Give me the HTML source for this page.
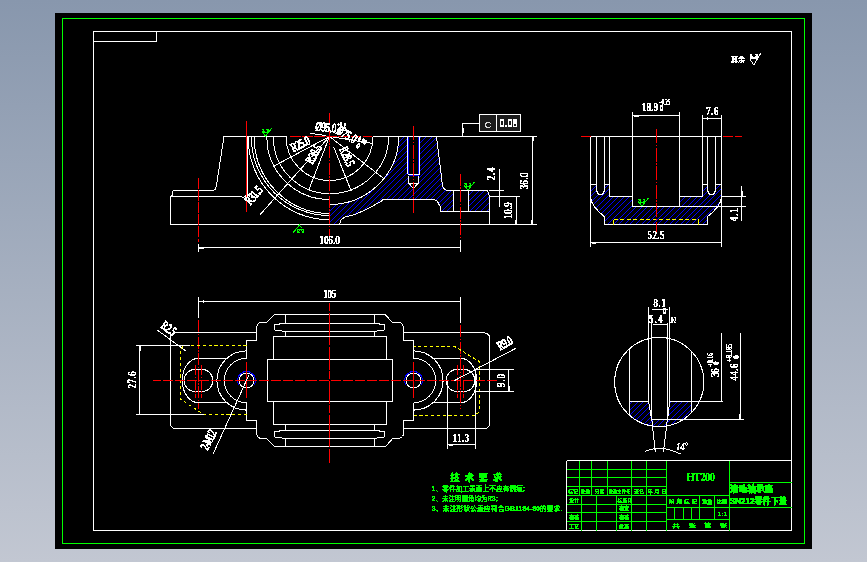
<!DOCTYPE html>
<html lang="zh"><head><meta charset="utf-8"><title>SN212 滚动轴承座 零件下盖</title>
<style>html,body{margin:0;padding:0;background:#a5afbe;overflow:hidden}svg{display:block;position:absolute;left:0;top:0}text{white-space:pre}</style></head>
<body>
<svg width="867" height="562" viewBox="0 0 867 562">
<defs><linearGradient id="bg" x1="0" y1="0" x2="0" y2="1"><stop offset="0" stop-color="#8897ad"/><stop offset="1" stop-color="#c2c7d2"/></linearGradient><filter id="crisp" x="0" y="0" width="867" height="562" filterUnits="userSpaceOnUse" color-interpolation-filters="sRGB"><feComponentTransfer><feFuncA type="discrete" tableValues="0 0 1 1 1"/></feComponentTransfer></filter><clipPath id="cf"><path d="M329.5 204.5 L329.5 204.5 L333.12 204.41 L336.73 204.13 L340.33 203.66 L343.89 203.01 L347.41 202.18 L350.88 201.17 L354.3 199.98 L357.65 198.62 L360.92 197.09 L364.1 195.39 L367.19 193.53 L370.17 191.51 L373.05 189.35 L375.8 187.03 L378.43 184.58 L380.93 182 L383.28 179.29 L385.48 176.47 L387.54 173.54 L389.43 170.5 L391.16 167.37 L392.72 164.16 L394.1 160.87 L395.31 157.51 L396.34 154.1 L397.19 150.64 L397.85 147.14 L398.32 143.61 L398.61 140.06 L398.7 136.5 L436.5 136.5 L442.4 184.8 L443.2 187.6 L445.2 189.8 L448.7 190.4 L487.3 190.4 L489.4 196.6 L489.4 211.2 L440.8 211.2 L440.6 207.5 L439.4 205.2 L437.5 201.5 L433.9 199.3 L383.5 199.3 L381.3 201.2 L371 207 L364 210.5 L354.7 214.5 L345.5 216.8 L341 219.7 L339.7 223.8 L339.7 224.5 L329.5 224.5ZM407.5 136.5 L419.5 136.5 L419.5 174.3 L418.5 174.3 L418.5 183 L413.5 188.4 L408.5 183 L408.5 174.3 L407.5 174.3ZM453.3 190.4 L468.3 190.4 L468.3 211.2 L453.3 211.2Z" clip-rule="evenodd"/></clipPath><clipPath id="cs"><path d="M590.5 184.5 L596.5 184.5 L596.5 190.5 L598.5 194.5 L602.5 194.5 L604.5 190.5 L604.5 184.5 L609.5 184.5 L609.5 196.5 L632.5 196.5 L632.5 206.5 L679.5 206.5 L679.5 196.5 L702.5 196.5 L702.5 184.5 L707.5 184.5 L707.5 190.5 L709.5 194.5 L713.5 194.5 L715.5 190.5 L715.5 184.5 L721.5 184.5 L721.5 197 L720.5 201.8 L717.3 207 L712.7 212.2 L708.1 216.2 L707.5 216.8 L707.5 224.5 L604.5 224.5 L604.5 216.8 L603.9 216.2 L599.3 212.2 L594.7 207 L591.5 201.8 L590.5 197Z" clip-rule="evenodd"/></clipPath><clipPath id="cd"><path d="M629.5 401.5 L629.5 415.27 L631.24 416.75 L633.05 418.13 L634.93 419.42 L636.87 420.61 L638.87 421.7 L640.92 422.68 L643.02 423.56 L645.16 424.33 L647.34 425 L649.55 425.54 L651.79 425.98 L654.04 426.3 L656.31 426.51 L658.59 426.6 L660.87 426.57 L663.14 426.43 L665.4 426.17 L667.65 425.79 L669.87 425.3 L672.07 424.7 L674.23 423.99 L676.36 423.17 L678.44 422.24 L680.46 421.2 L682.44 420.07 L684.35 418.83 L686.2 417.5 L687.98 416.08 L689.68 414.56 L691.3 412.96 L691.3 401.5ZM648.6 401.5 L669.6 401.5 L667.6 419.2 L651.6 419.2Z" clip-rule="evenodd"/></clipPath></defs>
<rect width="867" height="562" fill="url(#bg)"/>
<rect x="55" y="13" width="757" height="536" fill="#000"/>
<g fill="none" stroke-width="1" shape-rendering="crispEdges">
<rect x="62.5" y="18.5" width="742" height="525" stroke="#0f0"/>
<rect x="93.5" y="31.5" width="698" height="499" stroke="#fff"/>
<line x1="93" y1="41.5" x2="157" y2="41.5" stroke="#fff"/>
<line x1="156.5" y1="31" x2="156.5" y2="42" stroke="#fff"/>
<g clip-path="url(#cf)" stroke="#00f"><path d="M328.5 139.5L492.5 -24.5M328.5 145.5L492.5 -18.5M328.5 150.5L492.5 -13.5M328.5 156.5L492.5 -7.5M328.5 161.5L492.5 -2.5M328.5 167.5L492.5 3.5M328.5 173.5L492.5 9.5M328.5 178.5L492.5 14.5M328.5 184.5L492.5 20.5M328.5 189.5L492.5 25.5M328.5 195.5L492.5 31.5M328.5 201.5L492.5 37.5M328.5 206.5L492.5 42.5M328.5 212.5L492.5 48.5M328.5 217.5L492.5 53.5M328.5 223.5L492.5 59.5M328.5 229.5L492.5 65.5M328.5 234.5L492.5 70.5M328.5 240.5L492.5 76.5M328.5 245.5L492.5 81.5M328.5 251.5L492.5 87.5M328.5 257.5L492.5 93.5M328.5 262.5L492.5 98.5M328.5 268.5L492.5 104.5M328.5 273.5L492.5 109.5M328.5 279.5L492.5 115.5M328.5 285.5L492.5 121.5M328.5 290.5L492.5 126.5M328.5 296.5L492.5 132.5M328.5 301.5L492.5 137.5M328.5 307.5L492.5 143.5M328.5 313.5L492.5 149.5M328.5 318.5L492.5 154.5M328.5 324.5L492.5 160.5M328.5 329.5L492.5 165.5M328.5 335.5L492.5 171.5M328.5 341.5L492.5 177.5M328.5 346.5L492.5 182.5M328.5 352.5L492.5 188.5M328.5 357.5L492.5 193.5M328.5 363.5L492.5 199.5M328.5 369.5L492.5 205.5M328.5 374.5L492.5 210.5M328.5 380.5L492.5 216.5M328.5 385.5L492.5 221.5"/></g>
<line x1="224" y1="136.5" x2="286.5" y2="136.5" stroke="#fff"/>
<line x1="373" y1="136.5" x2="537" y2="136.5" stroke="#fff"/>
<line x1="170.5" y1="224.5" x2="537" y2="224.5" stroke="#fff"/>
<path d="M224 136.5 L216.3 186.5 L215.5 189 L213.5 190.6 L210.5 190.5 L172.5 190.5" stroke="#fff" fill="none"/>
<path d="M172.5 190.5 L172.5 195 L170.5 196.5 L170.5 224.5" stroke="#fff" fill="none"/>
<path d="M170.5 196.5 L240.7 196.5 L243 197.3 L245.5 196.5 L247.3 193" stroke="#fff" fill="none"/>
<line x1="247.5" y1="136.5" x2="247.5" y2="196.5" stroke="#fff"/>
<path d="M436.5 136.5 L442.4 184.8 L443.2 187.6 L445.2 189.8 L448.7 190.4 L487.3 190.4 L489.5 196.6" stroke="#fff" fill="none"/>
<line x1="489.5" y1="196.6" x2="489.5" y2="224.5" stroke="#fff"/>
<line x1="489.5" y1="196.5" x2="520" y2="196.5" stroke="#fff"/>
<path d="M383.5 199.3 L433.9 199.3 L437.5 201.5 L439.4 205.2 L440.6 207.5 L440.8 211.2 L489.5 211.2" stroke="#fff" fill="none"/>
<path d="M383.5 199.3 L381.3 201.2 L371 207 L364 210.5 L354.7 214.5 L345.5 216.8 L341 219.7 L339.7 223.8 L339.7 224.5" stroke="#fff" fill="none"/>
<line x1="453.5" y1="190.4" x2="453.5" y2="211.2" stroke="#fff"/>
<line x1="468.5" y1="190.4" x2="468.5" y2="211.2" stroke="#fff"/>
<line x1="407.5" y1="136.5" x2="407.5" y2="174.3" stroke="#fff"/>
<line x1="419.5" y1="136.5" x2="419.5" y2="174.3" stroke="#fff"/>
<line x1="408.5" y1="136.5" x2="408.5" y2="174.3" stroke="#00f"/>
<line x1="418.5" y1="136.5" x2="418.5" y2="174.3" stroke="#00f"/>
<line x1="407.5" y1="174.5" x2="420" y2="174.5" stroke="#fff"/>
<line x1="408.5" y1="175.5" x2="419" y2="175.5" stroke="#00f"/>
<path d="M408.5 175.5 L408.5 183 L413.5 188.4 L418.5 183 L418.5 175.5" stroke="#fff" fill="none"/>
<line x1="408.5" y1="183.5" x2="419" y2="183.5" stroke="#fff"/>
<path d="M273.3 137.3 A56.2 56.3 0 0 0 329.5 193.6" stroke="#fff" fill="none"/>
<path d="M266.9 137.3 A62.6 62.2 0 0 0 329.5 199.5" stroke="#fff" fill="none"/>
<path d="M254.2 137.3 A75.3 76.2 0 0 0 329.5 213.5" stroke="#fff" fill="none"/>
<path d="M251.3 137.3 A78.2 78.2 0 0 0 329.5 215.5" stroke="#fff" fill="none"/>
<path d="M248.1 137.3 A81.4 82.5 0 0 0 329.5 219.8" stroke="#fff" fill="none"/>
<path d="M286.2 137.3 A43.3 43.3 0 0 0 372.8 137.3" stroke="#fff" fill="none"/>
<path d="M329.5 193.7 A59.2 57.2 0 0 0 388.7 136.5" stroke="#fff" fill="none"/>
<path d="M329.5 204.5 A69.2 68 0 0 0 398.7 136.5" stroke="#fff" fill="none"/>
<line x1="329.5" y1="136.5" x2="274.32" y2="165.84" stroke="#fff"/>
<line x1="329.5" y1="136.5" x2="260.12" y2="214.64" stroke="#fff"/>
<line x1="329.5" y1="136.5" x2="309.07" y2="189.18" stroke="#fff"/>
<line x1="333.57" y1="146.72" x2="351.13" y2="190.85" stroke="#fff"/>
<line x1="329.5" y1="136.5" x2="384.02" y2="178.79" stroke="#fff"/>
<line x1="329.5" y1="136.5" x2="372.93" y2="143.53" stroke="#fff"/>
<line x1="310.4" y1="133.3" x2="325.7" y2="135.6" stroke="#fff"/>
<line x1="290" y1="136.5" x2="371.5" y2="136.5" stroke="#f00" stroke-dasharray="10.6 1.5"/>
<line x1="329.5" y1="113" x2="329.5" y2="241" stroke="#f00" stroke-dasharray="12 1.5 1.5 1.5"/>
<line x1="246.5" y1="121" x2="246.5" y2="212" stroke="#f00"/>
<line x1="198.5" y1="178" x2="198.5" y2="242" stroke="#f00" stroke-dasharray="10.6 1.5"/>
<line x1="460.5" y1="173.5" x2="460.5" y2="238" stroke="#f00" stroke-dasharray="12 1.5 1.5 1.5"/>
<line x1="413.5" y1="126" x2="413.5" y2="212.5" stroke="#f00" stroke-dasharray="14 1.5 1.5 1.5"/>
<line x1="198" y1="247.5" x2="461" y2="247.5" stroke="#fff"/>
<line x1="198.5" y1="244" x2="198.5" y2="252" stroke="#fff"/>
<line x1="460.5" y1="240" x2="460.5" y2="252" stroke="#fff"/>
<line x1="199" y1="248.5" x2="204" y2="248.5" stroke="#fff"/>
<line x1="532.5" y1="136.5" x2="532.5" y2="224.5" stroke="#fff"/>
<line x1="533.5" y1="136.5" x2="533.5" y2="141" stroke="#fff"/>
<line x1="531.5" y1="220" x2="531.5" y2="224.5" stroke="#fff"/>
<line x1="499.5" y1="169" x2="499.5" y2="207" stroke="#fff"/>
<line x1="489" y1="190.5" x2="503.7" y2="190.5" stroke="#fff"/>
<line x1="516.5" y1="196.6" x2="516.5" y2="224.5" stroke="#fff"/>
<line x1="515.5" y1="220" x2="515.5" y2="224.5" stroke="#fff"/>
<rect x="479.5" y="114.5" width="41" height="17" stroke="#fff" fill="#1c1c1c"/>
<line x1="496.5" y1="114.5" x2="496.5" y2="131.5" stroke="#fff"/>
<path d="M479.5 123.5 L462.5 123.5 L462.5 136.5" stroke="#fff" fill="none"/>
<line x1="463.5" y1="128" x2="463.5" y2="133" stroke="#fff"/>
<path d="M263 133 L265.5 136 L272 128" stroke="#0f0" fill="none"/>
<path d="M465.5 187 L468 190 L474.5 182" stroke="#0f0" fill="none"/>
<path d="M292.9 233 L299.4 225 L301.9 228" stroke="#0f0" fill="none"/>
<g clip-path="url(#cs)" stroke="#00f"><path d="M588.5 187.5L724.5 51.5M588.5 193.5L724.5 57.5M588.5 198.5L724.5 62.5M588.5 204.5L724.5 68.5M588.5 209.5L724.5 73.5M588.5 215.5L724.5 79.5M588.5 221.5L724.5 85.5M588.5 226.5L724.5 90.5M588.5 232.5L724.5 96.5M588.5 237.5L724.5 101.5M588.5 243.5L724.5 107.5M588.5 249.5L724.5 113.5M588.5 254.5L724.5 118.5M588.5 260.5L724.5 124.5M588.5 265.5L724.5 129.5M588.5 271.5L724.5 135.5M588.5 277.5L724.5 141.5M588.5 282.5L724.5 146.5M588.5 288.5L724.5 152.5M588.5 293.5L724.5 157.5M588.5 299.5L724.5 163.5M588.5 305.5L724.5 169.5M588.5 310.5L724.5 174.5M588.5 316.5L724.5 180.5M588.5 321.5L724.5 185.5M588.5 327.5L724.5 191.5M588.5 333.5L724.5 197.5M588.5 338.5L724.5 202.5M588.5 344.5L724.5 208.5M588.5 349.5L724.5 213.5M588.5 355.5L724.5 219.5M588.5 361.5L724.5 225.5"/></g>
<line x1="590.5" y1="136.5" x2="721.5" y2="136.5" stroke="#fff"/>
<line x1="590.5" y1="136.5" x2="590.5" y2="197" stroke="#fff"/>
<line x1="721.5" y1="136.5" x2="721.5" y2="197" stroke="#fff"/>
<path d="M590.5 197 L591.5 201.8 L594.7 207 L599.3 212.2 L603.9 216.2 L604.5 216.8 L604.5 224.5" stroke="#fff" fill="none"/>
<path d="M721.5 197 L720.5 201.8 L717.3 207 L712.7 212.2 L708.1 216.2 L707.5 216.8 L707.5 224.5" stroke="#fff" fill="none"/>
<line x1="604.5" y1="224.5" x2="708" y2="224.5" stroke="#fff"/>
<line x1="590.5" y1="184.5" x2="597" y2="184.5" stroke="#fff"/>
<line x1="604.5" y1="184.5" x2="610" y2="184.5" stroke="#fff"/>
<line x1="702.5" y1="184.5" x2="708" y2="184.5" stroke="#fff"/>
<line x1="715.5" y1="184.5" x2="722" y2="184.5" stroke="#fff"/>
<path d="M596.5 136.5 L596.5 184.5 L596.5 190.5 L598.5 194.5 L602.5 194.5 L604.5 190.5 L604.5 184.5 L604.5 136.5" stroke="#fff" fill="none"/>
<path d="M707.5 136.5 L707.5 184.5 L707.5 190.5 L709.5 194.5 L713.5 194.5 L715.5 190.5 L715.5 184.5 L715.5 136.5" stroke="#fff" fill="none"/>
<line x1="609.5" y1="136.5" x2="609.5" y2="196.5" stroke="#fff"/>
<line x1="609.5" y1="196.5" x2="633" y2="196.5" stroke="#fff"/>
<line x1="632.5" y1="112" x2="632.5" y2="206.5" stroke="#fff"/>
<line x1="632.5" y1="206.5" x2="680" y2="206.5" stroke="#fff"/>
<line x1="679.5" y1="112" x2="679.5" y2="206.5" stroke="#fff"/>
<line x1="679.5" y1="196.5" x2="703" y2="196.5" stroke="#fff"/>
<line x1="702.5" y1="115" x2="702.5" y2="196.5" stroke="#fff"/>
<line x1="721.5" y1="115" x2="721.5" y2="136.5" stroke="#fff"/>
<line x1="590.5" y1="197" x2="590.5" y2="247" stroke="#fff"/>
<line x1="721.5" y1="197" x2="721.5" y2="247" stroke="#fff"/>
<line x1="613.5" y1="219.5" x2="698.5" y2="219.5" stroke="#ff0" stroke-dasharray="4 2.5"/>
<line x1="613.5" y1="219.5" x2="613.5" y2="224.5" stroke="#ff0"/>
<line x1="698.5" y1="219.5" x2="698.5" y2="224.5" stroke="#ff0"/>
<line x1="656.5" y1="129" x2="656.5" y2="232" stroke="#f00" stroke-dasharray="14 1.5 1.5 1.5"/>
<line x1="581" y1="136.5" x2="590.5" y2="136.5" stroke="#f00"/>
<line x1="722.5" y1="136.5" x2="742" y2="136.5" stroke="#f00" stroke-dasharray="10 2"/>
<line x1="632.5" y1="115.5" x2="680" y2="115.5" stroke="#fff"/>
<line x1="634" y1="116.5" x2="639" y2="116.5" stroke="#fff"/>
<line x1="702.5" y1="118.5" x2="722" y2="118.5" stroke="#fff"/>
<line x1="707.5" y1="117" x2="707.5" y2="120" stroke="#fff"/>
<line x1="590.5" y1="242.5" x2="722" y2="242.5" stroke="#fff"/>
<line x1="592" y1="243.5" x2="596" y2="243.5" stroke="#fff"/>
<line x1="721.5" y1="196.5" x2="746" y2="196.5" stroke="#fff"/>
<line x1="679.5" y1="206.5" x2="746" y2="206.5" stroke="#fff"/>
<line x1="741.5" y1="186" x2="741.5" y2="221" stroke="#fff"/>
<line x1="742.5" y1="191" x2="742.5" y2="196" stroke="#fff"/>
<path d="M639.5 203 L642 206 L648.5 198" stroke="#0f0" fill="none"/>
<path d="M170.5 424.3 L170.5 337 L171.2 334.5 L173 333 L175.5 332.5 L256.5 332.5" stroke="#fff" fill="none"/>
<path d="M170.5 424.3 L171.5 426.8 L173 428 L175.2 428.6 L256.5 428.6" stroke="#fff" fill="none"/>
<path d="M403.5 332.5 L483.8 332.5 L487 333.5 L489 335.5 L489.7 338.3 L489.7 423.4 L489 426 L487.5 427.8 L485.5 428.6 L403.5 428.6" stroke="#fff" fill="none"/>
<path d="M246.5 358.5 L246.5 340.5 L256.5 340.5 L256.5 327.4 L257.5 324.5 L259 323 L261 322.4 L266.7 322.4 L274.3 314.5 L385 314.5 L392.5 322.4 L398.5 322.4 L401 323 L402.7 324.8 L403.5 327.6 L403.5 340.5 L413.5 340.5 L413.5 358.5" stroke="#fff" fill="none"/>
<path d="M246.5 402.7 L246.5 420.5 L256.5 420.5 L256.5 433.8 L257.5 436.5 L259.5 438 L262.5 438.7 L266.8 438.7 L274.3 446.5 L385.5 446.5 L392.5 438.7 L397.3 438.7 L400.5 438 L402.5 436.5 L403.5 434.7 L403.5 420.5 L413.5 420.5 L413.5 402.7" stroke="#fff" fill="none"/>
<rect x="267.5" y="359.5" width="125" height="42" stroke="#fff"/>
<path d="M273.5 359.5 L273.5 336.5 L386.5 336.5 L386.5 359.5" stroke="#fff" fill="none"/>
<path d="M273.5 401.5 L273.5 424.5 L386.5 424.5 L386.5 401.5" stroke="#fff" fill="none"/>
<line x1="285.5" y1="314.5" x2="285.5" y2="323.5" stroke="#fff"/>
<line x1="285.5" y1="331.5" x2="285.5" y2="336.5" stroke="#fff"/>
<line x1="285.5" y1="424.5" x2="285.5" y2="430.5" stroke="#fff"/>
<line x1="285.5" y1="438.5" x2="285.5" y2="446.5" stroke="#fff"/>
<line x1="374.5" y1="314.5" x2="374.5" y2="323.5" stroke="#fff"/>
<line x1="374.5" y1="331.5" x2="374.5" y2="336.5" stroke="#fff"/>
<line x1="374.5" y1="424.5" x2="374.5" y2="430.5" stroke="#fff"/>
<line x1="374.5" y1="438.5" x2="374.5" y2="446.5" stroke="#fff"/>
<path d="M285.5 323.5 L279.5 323.5 L279 324.5 L274.5 324.5 L274.5 329.5 L276 330.5 L281.5 330.5 L282.5 331.5 L285.5 331.5 L373.5 331.5 L376.5 331.5 L377.5 330.5 L383 330.5 L384.5 329.5 L384.5 324.5 L380 324.5 L379.5 323.5 L373.5 323.5 L285.5 323.5" stroke="#fff" fill="none"/>
<path d="M285.5 430.5 L279.5 430.5 L279 431.5 L274.5 431.5 L274.5 436.5 L276 437.5 L281.5 437.5 L282.5 438.5 L285.5 438.5 L373.5 438.5 L376.5 438.5 L377.5 437.5 L383 437.5 L384.5 436.5 L384.5 431.5 L380 431.5 L379.5 430.5 L373.5 430.5 L285.5 430.5" stroke="#fff" fill="none"/>
<path d="M246.5 350.9 A29.6 29.6 0 0 0 246.5 410.1" stroke="#fff" fill="none"/>
<path d="M246.5 358.3 A22.2 22.2 0 0 0 246.5 402.7" stroke="#fff" fill="none"/>
<circle cx="246.5" cy="380.5" r="7.5" stroke="#fff" fill="none"/>
<path d="M238.71 385 A9 9 0 1 1 254.29 385" stroke="#00f" fill="none"/>
<line x1="246.5" y1="361.8" x2="246.5" y2="398" stroke="#f00"/>
<path d="M413.5 350.9 A29.6 29.6 0 0 1 413.5 410.1" stroke="#fff" fill="none"/>
<path d="M413.5 358.3 A22.2 22.2 0 0 1 413.5 402.7" stroke="#fff" fill="none"/>
<circle cx="413.5" cy="380.5" r="7.5" stroke="#fff" fill="none"/>
<path d="M405.71 385 A9 9 0 1 1 421.29 385" stroke="#00f" fill="none"/>
<line x1="413.5" y1="361.8" x2="413.5" y2="398" stroke="#f00"/>
<path d="M195.45 369.3 A11.2 11.2 0 0 0 195.45 391.7 L201.55 391.7 A11.2 11.2 0 0 0 201.55 369.3 Z" stroke="#fff" fill="none"/>
<path d="M198.5 358.3 A16.3 22.2 0 0 0 198.5 402.7" stroke="#fff" fill="none"/>
<line x1="198.5" y1="358.5" x2="226.8" y2="358.5" stroke="#fff"/>
<line x1="198.5" y1="402.5" x2="226.8" y2="402.5" stroke="#fff"/>
<line x1="198.5" y1="320" x2="198.5" y2="409" stroke="#f00" stroke-dasharray="12 1.5 1.5 1.5"/>
<line x1="195.5" y1="365" x2="195.5" y2="398" stroke="#f00" stroke-dasharray="10 1.5 1.5 1.5"/>
<line x1="201.5" y1="365" x2="201.5" y2="398" stroke="#f00" stroke-dasharray="10 1.5 1.5 1.5"/>
<path d="M457.45 369.3 A11.2 11.2 0 0 0 457.45 391.7 L463.55 391.7 A11.2 11.2 0 0 0 463.55 369.3 Z" stroke="#fff" fill="none"/>
<path d="M460.5 358.3 A16.3 22.2 0 0 1 460.5 402.7" stroke="#fff" fill="none"/>
<line x1="433.2" y1="358.5" x2="460.5" y2="358.5" stroke="#fff"/>
<line x1="433.2" y1="402.5" x2="460.5" y2="402.5" stroke="#fff"/>
<line x1="460.5" y1="325" x2="460.5" y2="409" stroke="#f00" stroke-dasharray="12 1.5 1.5 1.5"/>
<line x1="457.5" y1="365" x2="457.5" y2="398" stroke="#f00" stroke-dasharray="10 1.5 1.5 1.5"/>
<line x1="463.5" y1="365" x2="463.5" y2="398" stroke="#f00" stroke-dasharray="10 1.5 1.5 1.5"/>
<path d="M246.5 345.5 L184 345.5 L180.5 349 L180.5 399.2 L203.7 414.5 L246.5 414.5" stroke="#ff0" fill="none" stroke-dasharray="3.2 2.6"/>
<path d="M413.5 415.5 L475 415.5 L479.5 411.5 L479.5 361.7 L454.8 346.5 L413.5 346.5" stroke="#ff0" fill="none" stroke-dasharray="3.2 2.6"/>
<line x1="153" y1="380.5" x2="497" y2="380.5" stroke="#f00" stroke-dasharray="10 2" stroke-dashoffset="2"/>
<line x1="329.5" y1="303" x2="329.5" y2="463" stroke="#f00" stroke-dasharray="23 1.5 8 1.5" stroke-dashoffset="24.5"/>
<line x1="198.5" y1="301.5" x2="461" y2="301.5" stroke="#fff"/>
<line x1="198.5" y1="297" x2="198.5" y2="318" stroke="#fff"/>
<line x1="460.5" y1="297" x2="460.5" y2="323" stroke="#fff"/>
<line x1="203.5" y1="300" x2="203.5" y2="303" stroke="#fff"/>
<line x1="136" y1="345.5" x2="190" y2="345.5" stroke="#fff"/>
<line x1="136" y1="414.5" x2="204" y2="414.5" stroke="#fff"/>
<line x1="139.5" y1="345.5" x2="139.5" y2="414.5" stroke="#fff"/>
<line x1="140.5" y1="346" x2="140.5" y2="351" stroke="#fff"/>
<line x1="157.4" y1="330.1" x2="186.5" y2="351.5" stroke="#fff"/>
<line x1="454.4" y1="380.6" x2="515.8" y2="348.3" stroke="#fff"/>
<line x1="248.7" y1="375.5" x2="213.2" y2="453.7" stroke="#fff"/>
<line x1="476" y1="369.5" x2="513.5" y2="369.5" stroke="#fff"/>
<line x1="475" y1="391.5" x2="513.5" y2="391.5" stroke="#fff"/>
<line x1="508.5" y1="369.5" x2="508.5" y2="391.5" stroke="#fff"/>
<line x1="509.5" y1="386" x2="509.5" y2="391.5" stroke="#fff"/>
<line x1="447.5" y1="380.5" x2="447.5" y2="449" stroke="#fff"/>
<line x1="475.5" y1="369.5" x2="475.5" y2="449" stroke="#fff"/>
<line x1="447.5" y1="444.5" x2="476" y2="444.5" stroke="#fff"/>
<line x1="449" y1="445.5" x2="453" y2="445.5" stroke="#fff"/>
<g clip-path="url(#cd)" stroke="#00f"><path d="M628.5 405.5L693.5 340.5M628.5 411.5L693.5 346.5M628.5 416.5L693.5 351.5M628.5 422.5L693.5 357.5M628.5 427.5L693.5 362.5M628.5 433.5L693.5 368.5M628.5 439.5L693.5 374.5M628.5 444.5L693.5 379.5M628.5 450.5L693.5 385.5M628.5 455.5L693.5 390.5M628.5 461.5L693.5 396.5M628.5 467.5L693.5 402.5M628.5 472.5L693.5 407.5M628.5 478.5L693.5 413.5M628.5 483.5L693.5 418.5M628.5 489.5L693.5 424.5"/></g>
<circle cx="659.2" cy="382" r="44.6" stroke="#fff" fill="none"/>
<line x1="629.5" y1="348.73" x2="629.5" y2="415.27" stroke="#fff"/>
<line x1="691.5" y1="351.04" x2="691.5" y2="412.96" stroke="#fff"/>
<line x1="629.5" y1="401.5" x2="649" y2="401.5" stroke="#fff"/>
<line x1="669.5" y1="401.5" x2="723" y2="401.5" stroke="#fff"/>
<line x1="651.5" y1="419.5" x2="744" y2="419.5" stroke="#fff"/>
<line x1="648.5" y1="307" x2="648.5" y2="401.5" stroke="#fff"/>
<line x1="669.5" y1="307" x2="669.5" y2="401.5" stroke="#fff"/>
<line x1="651.5" y1="315" x2="651.5" y2="419.2" stroke="#fff"/>
<line x1="667.5" y1="323" x2="667.5" y2="419.2" stroke="#fff"/>
<line x1="648.6" y1="401.5" x2="651.6" y2="419.2" stroke="#fff"/>
<line x1="669.6" y1="401.5" x2="667.6" y2="419.2" stroke="#fff"/>
<line x1="651.8" y1="419.2" x2="655.3" y2="452.3" stroke="#fff"/>
<line x1="667.4" y1="419.2" x2="663.4" y2="452.3" stroke="#fff"/>
<path d="M645 451.5 L650 449.6 L655 448.5 L659 448.2 L664 448.6 L670 450 L676 452 L681.5 454.3" stroke="#fff" fill="none"/>
<line x1="721.5" y1="332.5" x2="721.5" y2="401.5" stroke="#fff"/>
<line x1="740.5" y1="333" x2="740.5" y2="419.2" stroke="#fff"/>
<line x1="739.5" y1="414" x2="739.5" y2="419.2" stroke="#fff"/>
<line x1="651.5" y1="309.5" x2="667.5" y2="309.5" stroke="#fff"/>
<line x1="652.5" y1="324.5" x2="667.5" y2="324.5" stroke="#fff"/>
<line x1="566.5" y1="460.5" x2="791.5" y2="460.5" stroke="#fff"/>
<line x1="566.5" y1="460.5" x2="566.5" y2="530.5" stroke="#fff"/>
<line x1="579.5" y1="460.5" x2="579.5" y2="495.5" stroke="#0f0"/>
<line x1="591.5" y1="460.5" x2="591.5" y2="495.5" stroke="#0f0"/>
<line x1="607.5" y1="460.5" x2="607.5" y2="495.5" stroke="#0f0"/>
<line x1="631.5" y1="460.5" x2="631.5" y2="530.5" stroke="#0f0"/>
<line x1="646.5" y1="460.5" x2="646.5" y2="530.5" stroke="#0f0"/>
<line x1="666.5" y1="460.5" x2="666.5" y2="530.5" stroke="#0f0"/>
<line x1="729.5" y1="460.5" x2="729.5" y2="530.5" stroke="#0f0"/>
<line x1="566.5" y1="469.5" x2="667" y2="469.5" stroke="#0f0"/>
<line x1="566.5" y1="477.5" x2="667" y2="477.5" stroke="#0f0"/>
<line x1="566.5" y1="486.5" x2="667" y2="486.5" stroke="#0f0"/>
<line x1="566.5" y1="495.5" x2="667" y2="495.5" stroke="#0f0"/>
<line x1="566.5" y1="504.5" x2="667" y2="504.5" stroke="#0f0"/>
<line x1="566.5" y1="512.5" x2="667" y2="512.5" stroke="#0f0"/>
<line x1="566.5" y1="521.5" x2="667" y2="521.5" stroke="#0f0"/>
<line x1="581.5" y1="495.5" x2="581.5" y2="530.5" stroke="#0f0"/>
<line x1="596.5" y1="495.5" x2="596.5" y2="530.5" stroke="#0f0"/>
<line x1="616.5" y1="495.5" x2="616.5" y2="530.5" stroke="#0f0"/>
<line x1="666.5" y1="495.5" x2="730" y2="495.5" stroke="#0f0"/>
<line x1="666.5" y1="507.5" x2="791.5" y2="507.5" stroke="#0f0"/>
<line x1="666.5" y1="519.5" x2="730" y2="519.5" stroke="#0f0"/>
<line x1="699.5" y1="495.5" x2="699.5" y2="519.5" stroke="#0f0"/>
<line x1="714.5" y1="495.5" x2="714.5" y2="519.5" stroke="#0f0"/>
<line x1="674.5" y1="507.5" x2="674.5" y2="519.5" stroke="#0f0"/>
<line x1="683.5" y1="507.5" x2="683.5" y2="519.5" stroke="#0f0"/>
<line x1="691.5" y1="507.5" x2="691.5" y2="519.5" stroke="#0f0"/>
<line x1="729.5" y1="482.5" x2="791.5" y2="482.5" stroke="#0f0"/>
<path d="M749.7 58.9 L757.5 58.9" stroke="#fff" fill="none"/>
<path d="M749.7 58.9 L753.8 64.9 L760.7 53.4" stroke="#fff" fill="none"/>
</g>
<g filter="url(#crisp)">
<text font-size="13" fill="#fff" transform="translate(314.9 130.4) rotate(6.5) scale(0.66 1)" textLength="31.82" lengthAdjust="spacing" stroke="#fff" stroke-width="0.68" font-family="'Liberation Serif','Noto Serif CJK SC',serif">Ø95.0</text>
<text font-size="8" fill="#fff" x="336.4" y="126.8" transform="rotate(8 336.4 126.8)" textLength="9.5" lengthAdjust="spacingAndGlyphs" font-weight="bold" stroke="#fff" stroke-width="0.12" font-family="'Liberation Serif','Noto Serif CJK SC',serif">+0.1</text>
<text font-size="8" fill="#fff" x="337.4" y="133.2" transform="rotate(8 337.4 133.2)" textLength="3.5" lengthAdjust="spacingAndGlyphs" font-weight="bold" stroke="#fff" stroke-width="0.12" font-family="'Liberation Serif','Noto Serif CJK SC',serif">0</text>
<text font-size="13" fill="#fff" transform="translate(293.2 152.3) rotate(-26) scale(0.66 1)" textLength="30.3" lengthAdjust="spacing" stroke="#fff" stroke-width="0.68" font-family="'Liberation Serif','Noto Serif CJK SC',serif">R25.0</text>
<text font-size="13" fill="#fff" transform="translate(312.5 164.9) rotate(-60) scale(0.66 1)" textLength="30.3" lengthAdjust="spacing" stroke="#fff" stroke-width="0.68" font-family="'Liberation Serif','Noto Serif CJK SC',serif">R38.5</text>
<text font-size="13" fill="#fff" transform="translate(339 149) rotate(66) scale(0.66 1)" textLength="30.3" lengthAdjust="spacing" stroke="#fff" stroke-width="0.68" font-family="'Liberation Serif','Noto Serif CJK SC',serif">R28.5</text>
<text font-size="13" fill="#fff" transform="translate(335.5 133.1) rotate(30) scale(0.66 1)" textLength="31.82" lengthAdjust="spacing" stroke="#fff" stroke-width="0.68" font-family="'Liberation Serif','Noto Serif CJK SC',serif">Ø75.0</text>
<text font-size="8" fill="#fff" x="354.5" y="139" transform="rotate(30 354.5 139)" textLength="12" lengthAdjust="spacingAndGlyphs" font-weight="bold" stroke="#fff" stroke-width="0.12" font-family="'Liberation Serif','Noto Serif CJK SC',serif">+0.08</text>
<text font-size="8" fill="#fff" x="355.5" y="147.3" transform="rotate(30 355.5 147.3)" textLength="3.5" lengthAdjust="spacingAndGlyphs" font-weight="bold" stroke="#fff" stroke-width="0.12" font-family="'Liberation Serif','Noto Serif CJK SC',serif">0</text>
<text font-size="13" fill="#fff" transform="translate(250.2 205.6) rotate(-48.4) scale(0.66 1)" textLength="30.3" lengthAdjust="spacing" stroke="#fff" stroke-width="0.68" font-family="'Liberation Serif','Noto Serif CJK SC',serif">R31.5</text>
<text font-size="13" fill="#fff" transform="translate(319.4 244.3) scale(0.66 1)" textLength="31.06" lengthAdjust="spacing" stroke="#fff" stroke-width="0.68" font-family="'Liberation Serif','Noto Serif CJK SC',serif">106.0</text>
<text font-size="13" fill="#fff" transform="translate(495.4 180.1) rotate(-90) scale(0.66 1)" textLength="18.64" lengthAdjust="spacing" stroke="#fff" stroke-width="0.68" font-family="'Liberation Serif','Noto Serif CJK SC',serif">2.4</text>
<text font-size="13" fill="#fff" transform="translate(512.3 218.4) rotate(-90) scale(0.66 1)" textLength="24.24" lengthAdjust="spacing" stroke="#fff" stroke-width="0.68" font-family="'Liberation Serif','Noto Serif CJK SC',serif">10.9</text>
<text font-size="13" fill="#fff" transform="translate(528 189.3) rotate(-90) scale(0.66 1)" textLength="25.3" lengthAdjust="spacing" stroke="#fff" stroke-width="0.68" font-family="'Liberation Serif','Noto Serif CJK SC',serif">36.0</text>
<text font-size="13.5" fill="#fff" transform="translate(499.8 127.4) scale(0.66 1)" textLength="26.36" lengthAdjust="spacing" stroke="#fff" stroke-width="0.68" font-family="'Liberation Serif','Noto Serif CJK SC',serif">0.08</text>
<text font-size="9.6" fill="#dcdcdc" x="484.4" y="128" font-family="'Liberation Sans','Noto Sans CJK SC',sans-serif">C</text>
<text font-size="5.5" fill="#0f0" x="261.7" y="133" textLength="7" lengthAdjust="spacingAndGlyphs" font-weight="bold" stroke="#0f0" stroke-width="0.12" font-family="'Liberation Sans','Noto Sans CJK SC',sans-serif">3.2</text>
<text font-size="5.5" fill="#0f0" x="464.2" y="187" textLength="7" lengthAdjust="spacingAndGlyphs" font-weight="bold" stroke="#0f0" stroke-width="0.12" font-family="'Liberation Sans','Noto Sans CJK SC',sans-serif">3.2</text>
<text font-size="5.5" fill="#0f0" x="303.9" y="228.5" transform="rotate(180 303.9 228.5)" textLength="7" lengthAdjust="spacingAndGlyphs" font-weight="bold" stroke="#0f0" stroke-width="0.12" font-family="'Liberation Sans','Noto Sans CJK SC',sans-serif">6.3</text>
<text font-size="13" fill="#fff" transform="translate(642.1 110.8) scale(0.66 1)" textLength="24.24" lengthAdjust="spacing" stroke="#fff" stroke-width="0.68" font-family="'Liberation Serif','Noto Serif CJK SC',serif">18.9</text>
<text font-size="8" fill="#fff" x="658.6" y="104.8" textLength="11.8" lengthAdjust="spacingAndGlyphs" font-weight="bold" stroke="#fff" stroke-width="0.12" font-family="'Liberation Serif','Noto Serif CJK SC',serif">+0.25</text>
<text font-size="8" fill="#fff" x="659.8" y="110.8" textLength="3.5" lengthAdjust="spacingAndGlyphs" font-weight="bold" stroke="#fff" stroke-width="0.12" font-family="'Liberation Serif','Noto Serif CJK SC',serif">0</text>
<text font-size="13" fill="#fff" transform="translate(706.2 114.6) scale(0.66 1)" textLength="18.18" lengthAdjust="spacing" stroke="#fff" stroke-width="0.68" font-family="'Liberation Serif','Noto Serif CJK SC',serif">7.6</text>
<text font-size="13" fill="#fff" transform="translate(647.5 238.6) scale(0.66 1)" textLength="25.45" lengthAdjust="spacing" stroke="#fff" stroke-width="0.68" font-family="'Liberation Serif','Noto Serif CJK SC',serif">52.5</text>
<text font-size="13" fill="#fff" transform="translate(738.3 221.3) rotate(-90) scale(0.66 1)" textLength="19.7" lengthAdjust="spacing" stroke="#fff" stroke-width="0.68" font-family="'Liberation Serif','Noto Serif CJK SC',serif">4.1</text>
<text font-size="5.5" fill="#0f0" x="638.2" y="203" textLength="7" lengthAdjust="spacingAndGlyphs" font-weight="bold" stroke="#0f0" stroke-width="0.12" font-family="'Liberation Sans','Noto Sans CJK SC',sans-serif">3.2</text>
<text font-size="13" fill="#fff" transform="translate(323.6 297.8) scale(0.66 1)" textLength="18.94" lengthAdjust="spacing" stroke="#fff" stroke-width="0.68" font-family="'Liberation Serif','Noto Serif CJK SC',serif">105</text>
<text font-size="13" fill="#fff" transform="translate(136.4 388.5) rotate(-90) scale(0.66 1)" textLength="25.76" lengthAdjust="spacing" stroke="#fff" stroke-width="0.68" font-family="'Liberation Serif','Noto Serif CJK SC',serif">27.6</text>
<text font-size="13" fill="#fff" transform="translate(160.1 327.2) rotate(36) scale(0.66 1)" textLength="23.48" lengthAdjust="spacing" stroke="#fff" stroke-width="0.68" font-family="'Liberation Serif','Noto Serif CJK SC',serif">R2.5</text>
<text font-size="13" fill="#fff" transform="translate(499.9 350.5) rotate(-28) scale(0.66 1)" textLength="23.48" lengthAdjust="spacing" stroke="#fff" stroke-width="0.68" font-family="'Liberation Serif','Noto Serif CJK SC',serif">R9.0</text>
<text font-size="13" fill="#fff" transform="translate(504.6 387) rotate(-90) scale(0.66 1)" textLength="19.7" lengthAdjust="spacing" stroke="#fff" stroke-width="0.68" font-family="'Liberation Serif','Noto Serif CJK SC',serif">9.0</text>
<text font-size="13" fill="#fff" transform="translate(452.7 441.6) scale(0.66 1)" textLength="24.85" lengthAdjust="spacing" stroke="#fff" stroke-width="0.68" font-family="'Liberation Serif','Noto Serif CJK SC',serif">11.3</text>
<text font-size="13" fill="#fff" transform="translate(207.5 451.1) rotate(-63) scale(0.66 1)" textLength="31.82" lengthAdjust="spacing" stroke="#fff" stroke-width="0.68" font-family="'Liberation Serif','Noto Serif CJK SC',serif">2-M12</text>
<text font-size="13" fill="#fff" transform="translate(653.5 306.7) scale(0.66 1)" textLength="18.48" lengthAdjust="spacing" stroke="#fff" stroke-width="0.68" font-family="'Liberation Serif','Noto Serif CJK SC',serif">8.1</text>
<text font-size="13" fill="#fff" transform="translate(649.1 322.8) scale(0.66 1)" textLength="20.45" lengthAdjust="spacing" stroke="#fff" stroke-width="0.68" font-family="'Liberation Serif','Noto Serif CJK SC',serif">5.4</text>
<text font-size="8" fill="#fff" x="662.8" y="314.2" textLength="3.5" lengthAdjust="spacingAndGlyphs" font-weight="bold" stroke="#fff" stroke-width="0.12" font-family="'Liberation Serif','Noto Serif CJK SC',serif">0</text>
<text font-size="8" fill="#fff" x="669.8" y="323.4" textLength="6.5" lengthAdjust="spacingAndGlyphs" font-weight="bold" stroke="#fff" stroke-width="0.12" font-family="'Liberation Serif','Noto Serif CJK SC',serif">.02</text>
<text font-size="13" fill="#fff" transform="translate(718.9 376.7) rotate(-90) scale(0.66 1)" textLength="12.58" lengthAdjust="spacing" stroke="#fff" stroke-width="0.68" font-family="'Liberation Serif','Noto Serif CJK SC',serif">36</text>
<text font-size="8.5" fill="#fff" x="713" y="366.7" transform="rotate(-90 713 366.7)" textLength="13.7" lengthAdjust="spacingAndGlyphs" font-weight="bold" stroke="#fff" stroke-width="0.12" font-family="'Liberation Serif','Noto Serif CJK SC',serif">+0.16</text>
<text font-size="8" fill="#fff" x="719.2" y="365" transform="rotate(-90 719.2 365)" textLength="3.6" lengthAdjust="spacingAndGlyphs" font-weight="bold" stroke="#fff" stroke-width="0.12" font-family="'Liberation Serif','Noto Serif CJK SC',serif">0</text>
<text font-size="13" fill="#fff" transform="translate(737.9 380.4) rotate(-90) scale(0.66 1)" textLength="25.45" lengthAdjust="spacing" stroke="#fff" stroke-width="0.68" font-family="'Liberation Serif','Noto Serif CJK SC',serif">44.6</text>
<text font-size="8.5" fill="#fff" x="731.8" y="361.7" transform="rotate(-90 731.8 361.7)" textLength="18" lengthAdjust="spacingAndGlyphs" font-weight="bold" stroke="#fff" stroke-width="0.12" font-family="'Liberation Serif','Noto Serif CJK SC',serif">+0.105</text>
<text font-size="8" fill="#fff" x="739.2" y="358.8" transform="rotate(-90 739.2 358.8)" textLength="3.4" lengthAdjust="spacingAndGlyphs" font-weight="bold" stroke="#fff" stroke-width="0.12" font-family="'Liberation Serif','Noto Serif CJK SC',serif">0</text>
<text font-size="10.5" fill="#fff" x="676.3" y="450" textLength="11.5" lengthAdjust="spacingAndGlyphs" font-weight="bold" stroke="#fff" stroke-width="0.12" font-style="italic" font-family="'Liberation Serif','Noto Serif CJK SC',serif">14°</text>
<text font-size="13" fill="#0f0" transform="translate(686.5 481.2) scale(0.8 1)" textLength="35.62" lengthAdjust="spacing" font-weight="bold" stroke="#0f0" stroke-width="0.12" font-family="'Liberation Serif','Noto Serif CJK SC',serif">HT200</text>
<text font-size="9.2" fill="#0f0" x="729.8" y="492.4" textLength="43.5" lengthAdjust="spacingAndGlyphs" font-weight="bold" stroke="#0f0" stroke-width="0.4" font-family="'Liberation Sans','Noto Sans CJK SC','WenQuanYi Zen Hei',sans-serif">滚动轴承座</text>
<text font-size="9.2" fill="#0f0" x="729.8" y="504" textLength="57" lengthAdjust="spacingAndGlyphs" font-weight="bold" stroke="#0f0" stroke-width="0.4" font-family="'Liberation Sans','Noto Sans CJK SC','WenQuanYi Zen Hei',sans-serif">SN212零件下盖</text>
<text font-size="5.1" fill="#0f0" x="573" y="493.2" text-anchor="middle" font-weight="bold" stroke="#0f0" stroke-width="0.12" font-family="'Liberation Sans','Noto Sans CJK SC','WenQuanYi Zen Hei',sans-serif">标记</text>
<text font-size="5.1" fill="#0f0" x="585.5" y="493.2" text-anchor="middle" font-weight="bold" stroke="#0f0" stroke-width="0.12" font-family="'Liberation Sans','Noto Sans CJK SC','WenQuanYi Zen Hei',sans-serif">处数</text>
<text font-size="5.1" fill="#0f0" x="599.5" y="493.2" text-anchor="middle" font-weight="bold" stroke="#0f0" stroke-width="0.12" font-family="'Liberation Sans','Noto Sans CJK SC','WenQuanYi Zen Hei',sans-serif">分区</text>
<text font-size="4.4" fill="#0f0" x="619.5" y="493.2" text-anchor="middle" font-weight="bold" stroke="#0f0" stroke-width="0.12" font-family="'Liberation Sans','Noto Sans CJK SC','WenQuanYi Zen Hei',sans-serif">更改文件号</text>
<text font-size="5.1" fill="#0f0" x="639" y="493.2" text-anchor="middle" font-weight="bold" stroke="#0f0" stroke-width="0.12" font-family="'Liberation Sans','Noto Sans CJK SC','WenQuanYi Zen Hei',sans-serif">签名</text>
<text font-size="5.1" fill="#0f0" x="647.5" y="493.2" textLength="19" lengthAdjust="spacingAndGlyphs" font-weight="bold" stroke="#0f0" stroke-width="0.12" font-family="'Liberation Sans','Noto Sans CJK SC','WenQuanYi Zen Hei',sans-serif">年 月 日</text>
<text font-size="5.1" fill="#0f0" x="574" y="501.9" text-anchor="middle" font-weight="bold" stroke="#0f0" stroke-width="0.12" font-family="'Liberation Sans','Noto Sans CJK SC','WenQuanYi Zen Hei',sans-serif">设计</text>
<text font-size="5.1" fill="#0f0" x="574" y="519" text-anchor="middle" font-weight="bold" stroke="#0f0" stroke-width="0.12" font-family="'Liberation Sans','Noto Sans CJK SC','WenQuanYi Zen Hei',sans-serif">审核</text>
<text font-size="5.1" fill="#0f0" x="574" y="527.8" text-anchor="middle" font-weight="bold" stroke="#0f0" stroke-width="0.12" font-family="'Liberation Sans','Noto Sans CJK SC','WenQuanYi Zen Hei',sans-serif">工艺</text>
<text font-size="5" fill="#0f0" x="625" y="501.9" text-anchor="middle" font-weight="bold" stroke="#0f0" stroke-width="0.12" font-family="'Liberation Sans','Noto Sans CJK SC','WenQuanYi Zen Hei',sans-serif">标准化</text>
<text font-size="5.1" fill="#0f0" x="624" y="510.4" text-anchor="middle" font-weight="bold" stroke="#0f0" stroke-width="0.12" font-family="'Liberation Sans','Noto Sans CJK SC','WenQuanYi Zen Hei',sans-serif">审定</text>
<text font-size="5.1" fill="#0f0" x="624" y="519" text-anchor="middle" font-weight="bold" stroke="#0f0" stroke-width="0.12" font-family="'Liberation Sans','Noto Sans CJK SC','WenQuanYi Zen Hei',sans-serif">审核</text>
<text font-size="5.1" fill="#0f0" x="624" y="527.8" text-anchor="middle" font-weight="bold" stroke="#0f0" stroke-width="0.12" font-family="'Liberation Sans','Noto Sans CJK SC','WenQuanYi Zen Hei',sans-serif">批准</text>
<text font-size="5.1" fill="#0f0" x="668.5" y="503.4" textLength="29" lengthAdjust="spacingAndGlyphs" font-weight="bold" stroke="#0f0" stroke-width="0.12" font-family="'Liberation Sans','Noto Sans CJK SC','WenQuanYi Zen Hei',sans-serif">阶 段 标 记</text>
<text font-size="5.1" fill="#0f0" x="707" y="503.4" text-anchor="middle" font-weight="bold" stroke="#0f0" stroke-width="0.12" font-family="'Liberation Sans','Noto Sans CJK SC','WenQuanYi Zen Hei',sans-serif">重量</text>
<text font-size="5.1" fill="#0f0" x="722" y="503.4" text-anchor="middle" font-weight="bold" stroke="#0f0" stroke-width="0.12" font-family="'Liberation Sans','Noto Sans CJK SC','WenQuanYi Zen Hei',sans-serif">比例</text>
<text font-size="5.5" fill="#0f0" x="717.2" y="515.8" textLength="10" lengthAdjust="spacingAndGlyphs" font-weight="bold" stroke="#0f0" stroke-width="0.12" font-family="'Liberation Sans','Noto Sans CJK SC',sans-serif">1:1</text>
<text font-size="5.1" fill="#0f0" x="672.3" y="527.2" textLength="55" lengthAdjust="spacingAndGlyphs" font-weight="bold" stroke="#0f0" stroke-width="0.12" font-family="'Liberation Sans','Noto Sans CJK SC','WenQuanYi Zen Hei',sans-serif">共    张    第    张</text>
<text font-size="9.5" fill="#0f0" x="450.3" y="481.3" textLength="52" lengthAdjust="spacing" font-weight="bold" stroke="#0f0" stroke-width="0.3" font-family="'Liberation Sans','Noto Sans CJK SC','WenQuanYi Zen Hei',sans-serif">技术要求</text>
<text font-size="6.85" fill="#0f0" x="431.8" y="491.4" textLength="93.2" lengthAdjust="spacingAndGlyphs" font-weight="bold" stroke="#0f0" stroke-width="0.12" font-family="'Liberation Sans','Noto Sans CJK SC','WenQuanYi Zen Hei',sans-serif">1、零件加工表面上不应有划痕;</text>
<text font-size="6.85" fill="#0f0" x="431.8" y="501.3" textLength="66.1" lengthAdjust="spacingAndGlyphs" font-weight="bold" stroke="#0f0" stroke-width="0.12" font-family="'Liberation Sans','Noto Sans CJK SC','WenQuanYi Zen Hei',sans-serif">2、未注明圆角均为R3;</text>
<text font-size="6.85" fill="#0f0" x="431.8" y="511.2" textLength="130.6" lengthAdjust="spacingAndGlyphs" font-weight="bold" stroke="#0f0" stroke-width="0.12" font-family="'Liberation Sans','Noto Sans CJK SC','WenQuanYi Zen Hei',sans-serif">3、未注形状公差应符合GB1184-80的要求.</text>
<text font-size="7" fill="#fff" x="731" y="61.6" textLength="14" lengthAdjust="spacingAndGlyphs" font-weight="bold" stroke="#fff" stroke-width="0.12" font-family="'Liberation Sans','Noto Sans CJK SC','WenQuanYi Zen Hei',sans-serif">其余</text>
<text font-size="5.5" fill="#fff" x="749.5" y="57.6" textLength="8.5" lengthAdjust="spacingAndGlyphs" font-weight="bold" stroke="#fff" stroke-width="0.12" font-family="'Liberation Sans','Noto Sans CJK SC',sans-serif">6.3</text>
</g>
</svg>
</body></html>
